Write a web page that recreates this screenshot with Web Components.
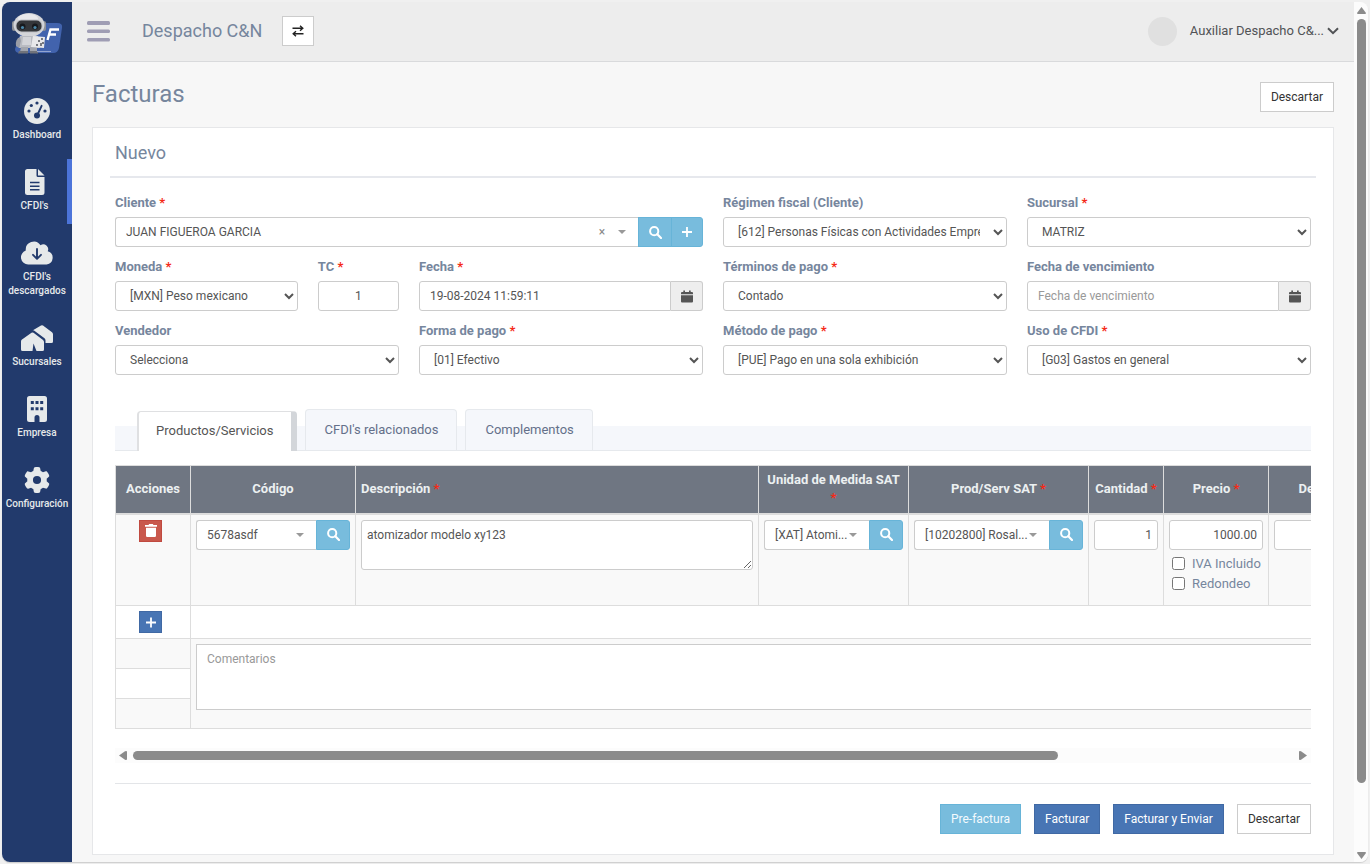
<!DOCTYPE html>
<html lang="es">
<head>
<meta charset="utf-8">
<meta name="viewport" content="width=device-width, initial-scale=1">
<title>Facturas</title>
<style>
  body { margin: 0; background: #f0f0f0; font: 13px/20px Roboto, "Liberation Sans", sans-serif; color: #76869d; }
</style>
</head>
<body>
<app-shell>
  <side-nav slot="nav">
    <nav-item icon="gauge">Dashboard</nav-item>
    <nav-item icon="file" active>CFDI's</nav-item>
    <nav-item icon="cloud">CFDI's descargados</nav-item>
    <nav-item icon="houses">Sucursales</nav-item>
    <nav-item icon="building">Empresa</nav-item>
    <nav-item icon="gear">Configuración</nav-item>
  </side-nav>
  <top-bar slot="top" company="Despacho C&amp;N" user="Auxiliar Despacho C&amp;..."></top-bar>
  <page-head heading="Facturas"><ui-button>Descartar</ui-button></page-head>
  <panel-card heading="Nuevo">
    <form-grid>
      <field-combo class="wide" label="Cliente" required value="JUAN FIGUEROA GARCIA"></field-combo>
      <field-select label="Régimen fiscal (Cliente)" value="[612] Personas Físicas con Actividades Empresariales y Profesionales"></field-select>
      <field-select label="Sucursal" required value="MATRIZ"></field-select>
      <field-pair>
        <field-select label="Moneda" required value="[MXN] Peso mexicano"></field-select>
        <field-input label="TC" required value="1" centered></field-input>
      </field-pair>
      <field-input label="Fecha" required value="19-08-2024 11:59:11" date></field-input>
      <field-select label="Términos de pago" required value="Contado"></field-select>
      <field-input label="Fecha de vencimiento" placeholder="Fecha de vencimiento" date></field-input>
      <field-select label="Vendedor" value="Selecciona"></field-select>
      <field-select label="Forma de pago" required value="[01] Efectivo"></field-select>
      <field-select label="Método de pago" required value="[PUE] Pago en una sola exhibición"></field-select>
      <field-select label="Uso de CFDI" required value="[G03] Gastos en general"></field-select>
    </form-grid>
    <tab-bar></tab-bar>
    <items-table></items-table>
    <scroll-rail></scroll-rail>
    <action-bar>
      <ui-button kind="info">Pre-factura</ui-button>
      <ui-button kind="primary">Facturar</ui-button>
      <ui-button kind="primary">Facturar y Enviar</ui-button>
      <ui-button>Descartar</ui-button>
    </action-bar>
  </panel-card>
</app-shell>

<script>
const ICONS = {
  gauge: ['0 0 26 26', `<circle cx="13" cy="13" r="13"/><g fill="#223a6c"><circle cx="5" cy="13" r="1.6"/><circle cx="7.3" cy="7.5" r="1.6"/><circle cx="13" cy="5" r="1.6"/><circle cx="21" cy="13" r="1.6"/><circle cx="13" cy="17.6" r="3"/></g><path d="M13.6 16.5 17.6 7.8" stroke="#223a6c" stroke-width="1.9" stroke-linecap="round"/>`],
  file: ['0 0 20 26', `<path d="M2.500 0H11.500V6.500A1.500 1.500 0 0 0 13 8H19.500V23.500A2.500 2.500 0 0 1 17 26H2.500A2.500 2.500 0 0 1 0 23.500V2.500A2.500 2.500 0 0 1 2.500 0Z"/><path d="M13 0 19.500 6.500H13Z"/><path d="M5 13.500H14.500M5 17.200H14.500M5 20.800H14.500" stroke="#223a6c" stroke-width="1.500"/>`],
  cloud: ['0 0 32 23', `<path d="M7.200 23A7.200 7.200 0 0 1 4.800 9 8 8 0 0 1 19.500 3.800 4.800 4.800 0 0 1 26.700 9.700 6.800 6.800 0 0 1 25.600 23Z"/><path d="M16 7.500V17M12 13.300 16 17.300 20 13.300" fill="none" stroke="#223a6c" stroke-width="1.900" stroke-linecap="round" stroke-linejoin="round"/>`],
  houses: ['0 0 32 26', `<path d="M11.500 5.500 20 .6Q21 0 22 .6L31 7.200Q32 8 32 9.200V16.500Q32 18 30.500 18H24.500V15.500Q24.500 14.200 23.500 13.300L13 5.600Q12.200 5.200 11.500 5.500Z"/><path d="M1 14.500 10.500 7.700Q11.500 7.100 12.500 7.800L22 15Q23 15.800 23 17V24.500Q23 26 21.500 26H15.500L12.500 18.500 11.500 26H1.500Q0 26 0 24.500V16.500Q0 15.200 1 14.500Z"/>`],
  building: ['0 0 20 26', `<path d="M2.500 0H17.500A2.500 2.500 0 0 1 20 2.500V23.500A2.500 2.500 0 0 1 17.500 26H12.500V21.500A2.500 2.500 0 0 0 7.500 21.500V26H2.500A2.500 2.500 0 0 1 0 23.500V2.500A2.500 2.500 0 0 1 2.500 0Z"/><path d="M3.800 5H6.800V8H3.800ZM8.500 5H11.500V8H8.500ZM13.200 5H16.200V8H13.200ZM3.800 11.300H6.800V14.300H3.800ZM8.500 11.300H11.500V14.300H8.500ZM13.200 11.300H16.200V14.300H13.200Z" fill="#223a6c"/>`],
  gear: ['0 0 512 512', `<path d="M495.900 166.600c3.200 8.700 .5 18.400-6.400 24.600l-43.300 39.400c1.100 8.300 1.700 16.800 1.700 25.400s-.6 17.100-1.700 25.400l43.300 39.400c6.900 6.200 9.600 15.900 6.400 24.600c-4.400 11.900-9.700 23.300-15.800 34.300l-4.700 8.100c-6.600 11-14 21.400-22.100 31.200c-5.900 7.200-15.700 9.600-24.500 6.800l-55.700-17.700c-13.400 10.300-28.200 18.900-44 25.400l-12.500 57.100c-2 9.100-9 16.300-18.200 17.800c-13.800 2.300-28 3.500-42.500 3.500s-28.700-1.200-42.500-3.500c-9.200-1.500-16.200-8.700-18.200-17.800l-12.500-57.100c-15.800-6.500-30.600-15.100-44-25.400L83.100 425.900c-8.800 2.800-18.600 .3-24.500-6.800c-8.100-9.800-15.500-20.200-22.100-31.200l-4.700-8.100c-6.100-11-11.400-22.400-15.800-34.300c-3.200-8.700-.5-18.400 6.400-24.600l43.300-39.400C64.600 273.100 64 264.600 64 256s.6-17.100 1.700-25.400L22.400 191.200c-6.900-6.200-9.600-15.900-6.400-24.600c4.400-11.900 9.700-23.300 15.800-34.300l4.700-8.100c6.600-11 14-21.400 22.100-31.200c5.900-7.200 15.700-9.600 24.500-6.800l55.700 17.700c13.400-10.300 28.200-18.900 44-25.400l12.500-57.100c2-9.100 9-16.300 18.200-17.800C227.300 1.200 241.500 0 256 0s28.700 1.200 42.500 3.500c9.200 1.500 16.200 8.700 18.200 17.800l12.500 57.100c15.800 6.500 30.600 15.100 44 25.400l55.700-17.700c8.800-2.800 18.600-.3 24.500 6.800c8.100 9.800 15.500 20.200 22.100 31.200l4.700 8.100c6.100 11 11.400 22.400 15.800 34.300zM256 336a80 80 0 1 0 0-160 80 80 0 1 0 0 160z"/>`],
  menu: ['0 0 23 21', `<rect width="23" height="4" rx="1.500"/><rect y="8.500" width="23" height="3.500" rx="1.500"/><rect y="17" width="23" height="3.500" rx="1.500"/>`],
  swap: ['0 0 12 12', `<path d="M.5 3.300H10.500M8 .8 10.800 3.300 8 5.800M11.500 8.800H1.500M4 6.300 1.200 8.800 4 11.300" fill="none" stroke="currentColor" stroke-width="1.400"/>`],
  chevron: ['0 0 12 8', `<path d="M1 1.200 6 6.200 11 1.200" fill="none" stroke="currentColor" stroke-width="2"/>`],
  search: ['0 0 13 13', `<circle cx="5.200" cy="5.200" r="4.100" fill="none" stroke="currentColor" stroke-width="2"/><path d="M8.300 8.300 12 12" stroke="currentColor" stroke-width="2.200" stroke-linecap="round"/>`],
  plus: ['0 0 12 12', `<path d="M6 1V11M1 6H11" stroke="currentColor" stroke-width="1.800"/>`],
  calendar: ['0 0 12 13', `<path d="M1 2H2.300V.5H4V2H8V.5H9.700V2H11Q12 2 12 3V4.200H0V3Q0 2 1 2ZM0 5.200H12V11.500Q12 12.500 11 12.500H1Q0 12.500 0 11.500Z"/>`],
  trash: ['0 0 12 13', `<path d="M0 .9H3.500L4.200 0H7.800L8.500 .9H12V2.700H0ZM1 3.700H11V11.800Q11 13 9.800 13H2.200Q1 13 1 11.800Z"/>`]
};

function define(name, css, render) {
  customElements.define(name, class extends HTMLElement {
    constructor() { super(); this.attachShadow({ mode: 'open' }); }
    connectedCallback() {
      const t = document.createElement('template');
      t.innerHTML = `<style>*{box-sizing:border-box}:host{display:block;box-sizing:border-box}${css}</style>${render(this)}`;
      this.shadowRoot.replaceChildren(t.content.cloneNode(true));
    }
  });
}
const attr = (el, n) => (el.getAttribute(n) || '').replace(/&/g, '&amp;').replace(/"/g, '&quot;');

define('ui-icon', `:host{display:inline-flex;flex:none;justify-content:center;align-items:center}
  svg{display:block;width:100%;height:100%;fill:currentColor}`,
  el => { const [box, body] = ICONS[el.getAttribute('name')]; return `<svg viewBox="${box}" aria-hidden="true">${body}</svg>`; });

define('app-shell', `
  :host{padding:2px;min-height:100vh;display:grid}
  .win{display:flex;min-width:0;border-radius:8px;overflow:hidden;background:#f7f7f7;box-shadow:0 1px 1px #ccc}
  .col{flex:1;min-width:0}
  .page{padding:20px 20px 4px}
  .rail{width:14px;background:#fcfcfc;display:flex;flex-direction:column;align-items:center;padding:5px 0 3px;gap:5px}
  .track{flex:1;display:flex;flex-direction:column}
  .track::after{content:"";flex:1}
  .thumb{flex:12;width:9px;border-radius:5px;background:#8b8b8b}
  svg{display:block;fill:#8b8b8b}`,
  () => `<div class="win"><slot name="nav"></slot>
    <div class="col"><slot name="top"></slot><main class="page"><slot></slot></main></div>
    <div class="rail"><svg width="9" height="7" viewBox="0 0 9 7"><path d="M4.500 0 9 6Q9 7 8 7H1Q0 7 0 6Z"/></svg>
      <div class="track"><div class="thumb"></div></div>
      <svg width="9" height="7" viewBox="0 0 9 7"><path d="M4.500 7 9 1Q9 0 8 0H1Q0 0 0 1Z"/></svg></div></div>`);

define('side-nav', `
  :host{width:70px;flex:none;background:#223a6c}
  .logo{display:block;margin:10px 0 32px 9px;width:52px;height:44px}
  nav{display:flex;flex-direction:column;gap:6px}`,
  () => `<a class="logo" href="#" aria-label="Inicio"><svg width="52" height="44" viewBox="0 0 52 44">
    <path d="M20 11H46Q52 11 51 16L48 36Q47 41 42 41H9Q4 41 4 37L10 20Z" fill="#4263ad"/>
    <path d="M36.500 28 39.500 17.500H48M37.800 22.500H45" fill="none" stroke="#fff" stroke-width="2.400"/>
    <rect x="1" y="9" width="4" height="10" rx="2" fill="#8d9097"/><rect x="31" y="9" width="4" height="10" rx="2" fill="#8d9097"/>
    <ellipse cx="18" cy="13" rx="15.500" ry="12" fill="#d4d5d9"/><ellipse cx="17" cy="6.500" rx="10" ry="4.500" fill="#e8e8eb"/>
    <rect x="4.500" y="7.500" width="27" height="13" rx="6" fill="#bfc1c7"/>
    <rect x="5.500" y="8.500" width="25" height="11" rx="5" fill="#34363a"/>
    <circle cx="11.500" cy="14.500" r="3" fill="#17191d"/><circle cx="24" cy="14.500" r="3" fill="#17191d"/>
    <circle cx="11.500" cy="15.500" r="1.600" fill="#4a87a8"/><circle cx="24" cy="15.500" r="1.600" fill="#4a87a8"/>
    <path d="M9 24H27L29 36H8Z" fill="#b9bbc2"/><path d="M12 25H20V33H11Z" fill="#d3d4d9"/>
    <path d="M9 25Q4 27 5 34L8 36 10 29Z" fill="#9a9da6"/>
    <path d="M10 35H17V40H9ZM19 35H26V40H19Z" fill="#a3a6ae"/><path d="M8 39H17V41.500H7ZM19 39H27V41.500H19Z" fill="#70737b"/>
    <path d="M22 24 34 25 33 36 20 35Z" fill="#e8e8ea"/><path d="M27 28H29V30H27ZM30 26H32V28H30ZM29 31H31V34H29ZM31 30H33V32H31ZM25 32H27V34H25Z" fill="#77797f"/>
    <path d="M26 39.500H40" stroke="#92a4d0"/></svg></a><nav><slot></slot></nav>`);

define('nav-item', `
  a{display:flex;flex-direction:column;align-items:center;gap:4px;padding:10px 0 11px;color:#e6e9ea;text-decoration:none;font-size:10px;line-height:14px;font-weight:500;text-align:center}
  :host([active]) a{border-right:5px solid #4c74d9}
  ui-icon{width:32px;height:26px}
  ui-icon[name=cloud]{padding:1px 0}
  span{white-space:nowrap}
  :host([icon=cloud]) span{white-space:normal;width:64px}`,
  el => `<a href="#"><ui-icon name="${attr(el,'icon')}"></ui-icon><span><slot></slot></span></a>`);

define('top-bar', `
  :host{background:#ededed;border-bottom:1px solid #d9dadc}
  header{display:flex;align-items:center;height:59px;padding:0 15px 1px}
  button{font:inherit;cursor:pointer;padding:0;border:0;background:none;display:flex;align-items:center;justify-content:center}
  .menu{color:#9f9db4;width:23px;height:24px}.menu ui-icon{width:23px;height:21px}
  .co{font-size:18px;color:#76869d;margin:0 20px 0 32px}
  .swap{width:32px;height:30px;background:#fff;border:1px solid #ccc;color:#222}.swap ui-icon{width:12px;height:12px}
  .sp{flex:1}
  .av{width:29px;height:29px;border-radius:50%;background:#e0e0e0;margin-right:13px}
  .user{color:#515356;font-size:13px;gap:3px}.user ui-icon{width:12px;height:8px}`,
  el => `<header><button class="menu" aria-label="Menú"><ui-icon name="menu"></ui-icon></button>
    <span class="co">${attr(el,'company')}</span><button class="swap" aria-label="Cambiar empresa"><ui-icon name="swap"></ui-icon></button>
    <span class="sp"></span><span class="av"></span><button class="user">${attr(el,'user')}<ui-icon name="chevron"></ui-icon></button></header>`);

define('page-head', `
  :host{display:flex;align-items:flex-start;justify-content:space-between;margin-bottom:15px}
  h1{margin:0;font-size:24px;font-weight:400;line-height:24px;color:#76869d}`,
  el => `<h1>${attr(el,'heading')}</h1><slot></slot>`);

define('ui-button', `
  button{display:block;height:30px;padding:0 10px;font:12px/18px Roboto,"Liberation Sans",sans-serif;background:#fff;border:1px solid #ccc;color:#333;cursor:pointer;white-space:nowrap}
  :host([kind=info]) button{background:#78bcdd;border-color:#67b4d8;color:#f4fafd}
  :host([kind=primary]) button{background:#4875b4;border-color:#4069a4;color:#fff}`,
  () => `<button type="button"><slot></slot></button>`);

define('panel-card', `
  :host{background:#fff;border:1px solid #e6e7e9;padding:10px 17px 20px}
  h2{margin:0 0 15px;padding:0 5px 8px;border-bottom:2px solid #e6e8ed;font-size:18px;font-weight:400;line-height:30px}
  .body{padding:0 5px}`,
  el => `<h2>${attr(el,'heading')}</h2><div class="body"><slot></slot></div>`);

define('form-grid', `
  :host{display:grid;grid-template-columns:repeat(4,minmax(0,1fr));gap:10px 20px}
  ::slotted(.wide){grid-column:span 2}`, () => `<slot></slot>`);
define('field-pair', `:host{display:grid;grid-template-columns:minmax(0,9fr) minmax(0,4fr);gap:20px}`, () => `<slot></slot>`);

const FIELD = `
  label{display:block;font-weight:700;font-size:13px;line-height:20px;margin-bottom:4px;color:#76869d;white-space:nowrap}
  i{font-style:normal;color:#f52a18}
  .row{display:flex}
  input,select{flex:1;width:100%;min-width:0;height:30px;margin:0;padding:5px 10px;border:1px solid #ccc;border-radius:3px;background:#fff;color:#555;font:12px/18px Roboto,"Liberation Sans",sans-serif}
  input::placeholder{color:#999}
  button{flex:none;display:flex;align-items:center;justify-content:center;height:30px;padding:0;cursor:pointer}
  .info{width:34px;background:#78bcdd;border:1px solid #67b4d8;color:#fff}
  .info ui-icon{width:13px;height:13px}`;
const label = el => `<label for="c">${attr(el,'label')}${el.hasAttribute('required') ? ' <i>*</i>' : ''}</label>`;

define('field-select', FIELD, el => `${label(el)}<select id="c"><option>${attr(el,'value')}</option></select>`);

define('field-input', FIELD + `
  :host([centered]) input{text-align:center}
  :host([date]) input{border-radius:3px 0 0 3px}
  .cal{width:32px;border:1px solid #ccc;border-left:0;border-radius:0 3px 3px 0;background:#eee;color:#555}
  .cal ui-icon{width:12px;height:13px}`,
  el => `${label(el)}<div class="row"><input id="c" type="text" value="${attr(el,'value')}" placeholder="${attr(el,'placeholder')}">${
    el.hasAttribute('date') ? '<button class="cal" type="button" aria-label="Abrir calendario"><ui-icon name="calendar"></ui-icon></button>' : ''}</div>`);

const COMBO = `
  .box{flex:1;min-width:0;display:grid;align-items:center}
  .box>*{grid-area:1/1}
  .box select{appearance:none;border-right:0;border-radius:3px 0 0 3px;padding-right:0}
  .caret{justify-self:end;margin-right:12px;border:4px solid transparent;border-top:4px solid #999;border-bottom:0;pointer-events:none}
  .info:last-child{border-radius:0 3px 3px 0}`;

define('field-combo', FIELD + COMBO + `
  .clear{justify-self:end;margin-right:31px;width:10px;border:0;background:none;color:#888;font:12px/18px Roboto,sans-serif}
  .info+.info{width:32px;margin-left:-1px}
  .info ui-icon[name=plus]{width:12px;height:12px}`,
  el => `${label(el)}<div class="row"><div class="box"><select id="c"><option>${attr(el,'value')}</option></select>
    <button class="clear" type="button" aria-label="Quitar">×</button><span class="caret"></span></div>
    <button class="info" type="button" aria-label="Buscar"><ui-icon name="search"></ui-icon></button><button class="info" type="button" aria-label="Agregar"><ui-icon name="plus"></ui-icon></button></div>`);

define('cell-combo', FIELD + COMBO,
  el => `<div class="row"><div class="box"><select aria-label="${attr(el,'name')}"><option>${attr(el,'value')}</option></select><span class="caret"></span></div>
    <button class="info" type="button" aria-label="Buscar"><ui-icon name="search"></ui-icon></button></div>`);

define('tab-bar', `
  :host{margin:34px 0 14px}
  .tabs{display:flex;align-items:flex-end;gap:8px;height:42px;padding-left:22px;background:linear-gradient(#fff 17px,#f5f7fb 17px);border-bottom:1px solid #e6e9ed}
  button{height:41px;padding:0 18px 0 19px;border:1px solid #e6e9ed;border-bottom:0;border-radius:4px 4px 0 0;background:#f5f7fb;color:#64708a;font:13px/20px Roboto,"Liberation Sans",sans-serif;cursor:pointer;white-space:nowrap}
  .on{height:40px;margin-bottom:-1px;padding:0 17px 2px;background:#fff;color:#555;border:2px solid #dfe0e2;border-width:1px 6px 0 2px;border-right-color:#d3d6da}`,
  () => `<div class="tabs" role="tablist"><button class="on" role="tab" aria-selected="true">Productos/Servicios</button><button role="tab">CFDI's relacionados</button><button role="tab">Complementos</button></div>`);

define('items-table', FIELD + `
  :host{overflow-x:auto;scrollbar-width:none}
  table{width:125%;min-width:1505px;table-layout:fixed;border-collapse:collapse}
  th,td{border:1px solid #ddd;padding:5px;vertical-align:top}
  th{height:48px;background:#6f7682;color:#ecf0f1;font-size:13px;font-weight:700;line-height:18px;vertical-align:middle;text-align:center;border-bottom:2px solid #ddd}
  th.l{text-align:left}
  tbody tr:nth-child(odd) td{background:#f9f9f9}
  .line td{height:92px}
  .thin td{height:30px}
  .act{text-align:center}
  .mini{display:inline-flex;width:23px;height:22px;margin-right:5px;color:#fff;vertical-align:top}
  .del{background:#c9584c;border:1px solid #c04a40}.add{background:#4875b4;border:1px solid #4069a4}
  .mini ui-icon{width:12px;height:13px}
  textarea{display:block;width:100%;height:50px;margin:0;padding:5px;border:1px solid #ccc;border-radius:3px;background:#fff;color:#555;font:12px/18px Roboto,"Liberation Sans",sans-serif}
  textarea::placeholder{color:#999}
  .note{height:66px;padding:5px 10px;border-radius:0;resize:none}
  td input[type=text]{text-align:right;padding:5px}
  .ck{display:flex;align-items:center;gap:7px;margin:0;padding-left:3px;font-weight:400;line-height:20px}
  .ck:first-of-type{margin-top:4px}
  .ck input{flex:none;width:13px;height:13px}`,
  () => `<table>
    <colgroup><col style="width:75px"><col style="width:165px"><col><col style="width:150px"><col style="width:180px"><col style="width:75px"><col style="width:105px"><col style="width:122px"><col style="width:229px"></colgroup>
    <thead><tr><th>Acciones</th><th>Código</th><th class="l">Descripción <i>*</i></th><th>Unidad de Medida SAT <i>*</i></th><th>Prod/Serv SAT <i>*</i></th><th>Cantidad <i>*</i></th><th>Precio <i>*</i></th><th>Descuento</th><th></th></tr></thead>
    <tbody>
    <tr class="line"><td class="act"><button class="mini del" type="button" aria-label="Eliminar"><ui-icon name="trash"></ui-icon></button></td>
      <td><cell-combo name="Código" value="5678asdf"></cell-combo></td>
      <td><textarea aria-label="Descripción">atomizador modelo xy123</textarea></td>
      <td><cell-combo name="Unidad de medida" value="[XAT] Atomi..."></cell-combo></td>
      <td><cell-combo name="Producto o servicio" value="[10202800] Rosal..."></cell-combo></td>
      <td><input type="text" aria-label="Cantidad" value="1"></td>
      <td><input type="text" aria-label="Precio" value="1000.00"><label class="ck"><input type="checkbox">IVA Incluido</label><label class="ck"><input type="checkbox">Redondeo</label></td>
      <td><input type="text" aria-label="Descuento"></td><td></td></tr>
    <tr><td class="act"><button class="mini add" type="button" aria-label="Agregar línea"><ui-icon name="plus"></ui-icon></button></td><td colspan="8"></td></tr>
    <tr class="thin"><td></td><td colspan="8" rowspan="3"><textarea class="note" aria-label="Comentarios" placeholder="Comentarios"></textarea></td></tr>
    <tr class="thin"><td></td></tr><tr class="thin"><td></td></tr>
    </tbody></table>`);

define('scroll-rail', `
  :host{display:flex;align-items:center;gap:6px;height:15px;margin:19px 0 20px;padding:0 4px;background:#fcfcfc}
  .track{flex:1;margin-right:4px}.thumb{width:80%;height:9px;border-radius:5px;background:#8b8b8b}
  svg{display:block;fill:#8b8b8b}`,
  () => `<svg width="8" height="9" viewBox="0 0 8 9"><path d="M0 4.500 6 .3Q8-.5 8 1V8Q8 9.500 6 8.700Z"/></svg><div class="track"><div class="thumb"></div></div><svg width="8" height="9" viewBox="0 0 8 9"><path d="M8 4.500 2 .3Q0-.5 0 1V8Q0 9.500 2 8.700Z"/></svg>`);

define('action-bar', `:host{display:flex;justify-content:flex-end;gap:13px;padding-top:20px;border-top:1px solid #e3e5e8}`, () => `<slot></slot>`);
</script>
</body>
</html>
